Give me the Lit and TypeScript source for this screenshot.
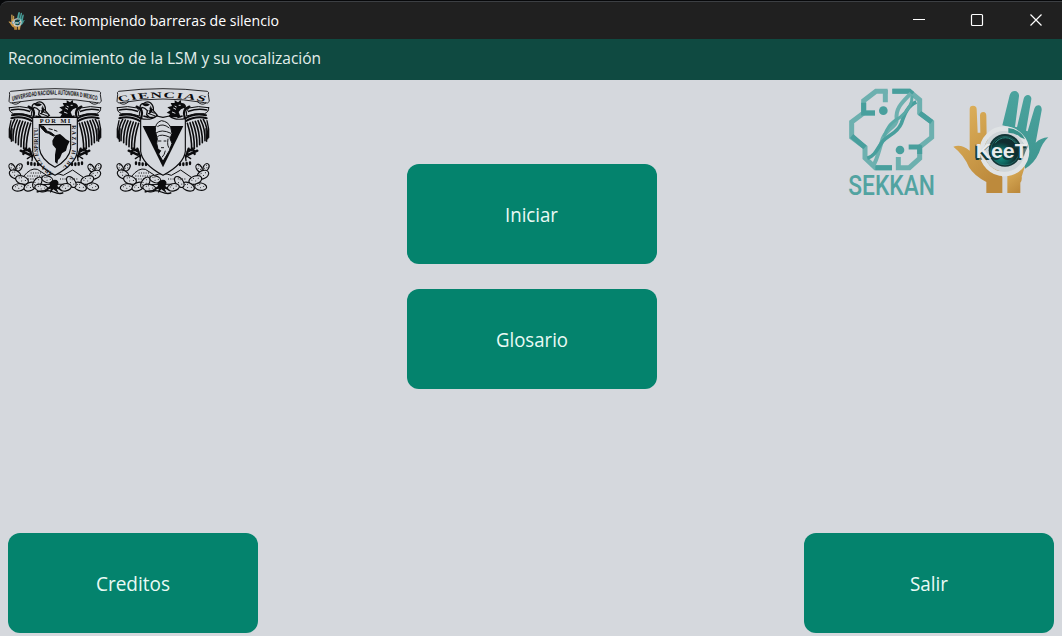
import { LitElement, html, css, svg } from "lit";
import { customElement, property } from "lit/decorators.js";

const INK = "#0b0b0d";
const PAPER = "#d5d8dd";

// One wing, drawn on the left side; the right one is its mirror image.
const wing = () => svg`
  <g fill="none" stroke=${INK} stroke-linecap="round">
    <path d="M28 83 Q60 76 88 84 Q98 94 94 108 Q70 98 40 101 Q26 95 28 83Z" stroke-width="3"/>
    <path d="M34 90 Q62 84 88 94" stroke-width="5"/>
    <path d="M36 106 Q70 98 100 116 M34 115 Q66 106 98 124" stroke-width="6"/>
    <path d="M86 80 Q108 88 100 112" stroke-width="7"/>
    ${[0, 1, 2, 3, 4, 5, 6].map(
      (i) => svg`<path d="M${44 + i * 8} ${118 + i * 2} Q${30 + i * 8} ${142 + i * 5} ${31 + i * 8} ${176 + i * 6}" stroke-width="4.8"/>`
    )}
    <path d="M33 122 Q26 145 28 172 M36 146 L34 184" stroke-width="4"/>
    <path d="M62 212 L88 224 M70 222 L76 206 L92 216 M88 206 L96 230" stroke-width="7"/>
    <path d="M82 236 L94 228 M98 226 L96 242" stroke-width="4"/>
    <path d="M84 247 v5 M94 249 v5 M104 250 v5 M114 250 v5" stroke-width="7"/>
  </g>`;

const pad = (x: number, y: number, rx: number, ry: number, a: number) => svg`
  <g transform="translate(${x} ${y}) rotate(${a})">
    <ellipse rx=${rx} ry=${ry} fill=${PAPER} stroke=${INK} stroke-width="3.4"/>
    <path d="M${-rx * 0.5} -3h.1M0 3h.1M${rx * 0.5} -2h.1M${-rx * 0.2} -6h.1" stroke=${INK} stroke-width="3" stroke-linecap="round"/>
  </g>`;

const cactus = () => svg`
  <path d="M70 290 Q92 262 112 268 L140 286 Q165 276 190 286 L218 270 L250 292 L240 312 L90 314Z" fill=${PAPER} stroke=${INK} stroke-width="3"/>
  <path d="M82 288 H138 M92 279 H126 M84 297 H150 M180 297 H232" stroke=${INK} stroke-width="3" stroke-dasharray="3 4"/>
  ${pad(36, 262, 12, 8, 60)}${pad(57, 262, 12, 8, -55)}${pad(45, 283, 18, 12, 25)}
  ${pad(66, 300, 20, 12, 20)}${pad(56, 322, 19, 11, -8)}${pad(90, 320, 19, 12, -25)}
  ${pad(112, 308, 19, 11, -55)}${pad(142, 298, 17, 10, 18)}${pad(124, 324, 20, 11, 12)}
  ${pad(294, 262, 12, 8, -60)}${pad(273, 264, 12, 8, 58)}${pad(285, 284, 18, 12, -25)}
  ${pad(262, 300, 20, 12, -20)}${pad(278, 320, 18, 11, 8)}${pad(240, 320, 20, 12, 22)}
  ${pad(214, 306, 19, 11, 52)}${pad(196, 322, 18, 11, -12)}
  <path d="M148 308 Q158 296 170 300 Q180 306 172 318 L188 332 L170 326 L176 340 L160 328 L150 340 L152 326 L130 332 L150 318Z" fill=${INK}/>
  <path d="M110 336 Q140 328 160 336 Q180 344 190 338" fill="none" stroke=${INK} stroke-width="4"/>`;

const birds = () => svg`
  <path d="M96 82 Q97 70 108 70 Q118 62 128 69 Q138 78 136 92 L148 106 L140 112 L124 112 L116 104 L118 92 Q110 82 102 82 L99 88Z" fill=${PAPER} stroke=${INK} stroke-width="4"/>
  <path d="M102 74 Q114 66 126 74 Q116 80 110 78Z M128 76 L134 94 L122 104Z" fill=${INK}/>
  <path d="M122 92 L140 100 M120 100 L142 108 M124 84 L136 90" stroke=${INK} stroke-width="3"/>
  <path d="M234 78 Q230 68 220 69 L218 60 L210 67 L200 61 L200 69 L188 69 L192 78 L178 82 L188 90 L176 98 L186 102 L180 112 L218 112 L212 96 Q218 86 228 84 L232 90Z" fill=${INK}/>
  <path d="M212 76 h6 M196 84 l8 4 M192 96 l10 4 M200 78 l6 3" stroke=${PAPER} stroke-width="3"/>
  <path d="M106 108 L122 112 M224 108 L208 112" stroke=${INK} stroke-width="5"/>`;

const crestBase = () => svg`
  ${wing()}
  <g transform="translate(330 0) scale(-1 1)">${wing()}</g>
  ${cactus()}
  ${birds()}
  <path d="M29 44 Q26 36 32 34 Q165 18 298 34 Q304 36 301 44 L304 64 Q300 72 290 68 Q165 46 40 68 Q30 72 27 64Z" fill=${PAPER} stroke=${INK} stroke-width="2.6"/>
  <path d="M36 69 Q48 78 62 65 M294 69 Q282 78 268 65" fill="none" stroke=${INK} stroke-width="2.6"/>`;

@customElement("unam-crest")
class UnamCrest extends LitElement {
  static styles = css`
    :host { display: block; width: 110px; height: 120px; }
    .art { display: block; width: 100%; height: 100%; }
    .motto { font: 700 17px "Liberation Serif", serif; fill: #0b0b0d; }
    .top { font: 700 19px "Liberation Serif", serif; fill: #0b0b0d; }
    .ribbon { font: 700 20px "Liberation Sans", sans-serif; fill: #0b0b0d; }
  `;
  render() {
    return html`<svg class="art" viewBox="0 0 330 360">
      ${crestBase()}
      ${svg`
      <path id="rib" d="M61 106 Q275 68 493 106" fill="none"/>
      <g transform="scale(.6 1) translate(0 -43)">
        <text class="ribbon"><textPath href="#rib" textLength="428" lengthAdjust="spacingAndGlyphs">UNIVERSIDAD NACIONAL AUTONOMA D MEXICO</textPath></text>
      </g>
      <path d="M98 112 H232 V214 Q228 252 165 286 Q102 252 98 214Z" fill=${PAPER} stroke=${INK} stroke-width="3.4"/>
      <path d="M118 134 H212 V205 Q208 238 165 262 Q122 238 118 205Z" fill=${PAPER} stroke=${INK} stroke-width="3.4"/>
      <text class="top" x="119" y="130" textLength="92">POR MI</text>
      <path id="lft" d="M160 280 Q114 252 114 212 V134" fill="none"/>
      <text class="motto"><textPath href="#lft" textLength="154">ARA EL ESPIRITU</textPath></text>
      <path id="rgt" d="M216 136 V210 Q212 250 168 276" fill="none"/>
      <text class="motto"><textPath href="#rgt" textLength="134">RAZA HABL</textPath></text>
      <path d="M119 136 L132 140 L142 154 L152 157 L164 166 L160 168 L146 160 L136 157 L124 144Z M146 146 L158 149 M162 150 L172 154" fill=${INK} stroke=${INK} stroke-width="3"/>
      <path d="M166 166 L180 162 L190 170 L198 178 L209 184 L202 198 L198 212 L186 220 L180 234 L174 240 L172 252 L165 246 L165 224 L168 206 L158 194 L157 182Z" fill=${INK}/>
      `}
    </svg>`;
  }
}

@customElement("ciencias-crest")
class CienciasCrest extends LitElement {
  static styles = css`
    :host { display: block; width: 110px; height: 120px; }
    .art { display: block; width: 100%; height: 100%; }
    .ribbon { font: 700 25px "Liberation Serif", serif; fill: #0b0b0d; }
  `;
  render() {
    return html`<svg class="art" viewBox="0 0 330 360">
      ${crestBase()}
      ${svg`
      <path id="rib" d="M18.500 66 Q86 41 155 66" fill="none"/>
      <g transform="scale(1.9 1)">
        <text class="ribbon"><textPath href="#rib" textLength="136">CIENCIAS</textPath></text>
      </g>
      <path d="M98 116 Q130 122 146 108 L165 112 L184 108 Q200 122 232 116 V214 Q228 252 165 286 Q102 252 98 214Z" fill=${PAPER} stroke=${INK} stroke-width="3.4"/>
      <path d="M104 138 H226 L165 262Z" fill=${INK}/>
      <path d="M142 154 Q140 128 160 122 Q180 124 188 142 L192 160 L186 176 L192 190 L184 212 L165 244 L152 222 L158 212 L150 208 L146 190 L148 176Z" fill=${PAPER} stroke=${INK} stroke-width="3"/>
      <path d="M143 160 Q160 146 189 160 M148 170 Q160 160 186 172 M150 183 h10 M167 183 h8 M159 203 h9 M180 176 Q176 200 186 206 M172 212 Q170 224 162 232 M148 140 Q164 128 184 144" fill="none" stroke=${INK} stroke-width="2.8"/>
      `}
    </svg>`;
  }
}

@customElement("sekkan-logo")
class SekkanLogo extends LitElement {
  static styles = css`
    :host { display: block; width: 105px; height: 120px; }
    .art { display: block; width: 100%; height: 100%; overflow: visible; }
    .word { font: 500 81px Roboto, sans-serif; fill: #52a3a1; }
  `;
  render() {
    return html`<svg class="art" viewBox="0 0 315 360">
      <g fill="none" stroke="#6db0af" stroke-width="15">
        <path d="M143 34 H108 L71 62 V99 L35 126 V172 L75 202 V234 L106 263 H156" />
        <path d="M157 34 H208 L239 60 V99 L275 126 V172 L239 201 V235 L208 263 H175 V231" />
        <path d="M71 99 H105 M136 30 V67" />
        <path d="M206 201 H242" stroke="#489f9d" />
      </g>
      <g fill="none" stroke="#489f9d" stroke-width="15">
        <path d="M71 68 V99 H105 M157 34 H208 L218 42 M35 168 L75 202 M106 263 H156 M239 99 L275 126 M239 196 V222" />
      </g>
      <path d="M213 40 C188 66 166 84 170 118 C172 140 138 146 128 176 C116 214 112 240 98 260" fill="none" stroke="#6db0af" stroke-width="12" />
      <path d="M229 66 C204 76 194 100 184 130 C172 160 146 164 128 184 C112 204 108 226 82 235" fill="none" stroke="#489f9d" stroke-width="11" />
      <path d="M216 48 C218 70 204 92 180 112 C150 128 140 146 132 170" fill="none" stroke="#5aaaa7" stroke-width="9" />
      <circle cx="130" cy="92" r="13" fill="#489f9d" />
      <circle cx="180" cy="210" r="13" fill="#489f9d" />
      <text class="word" x="25" y="344" textLength="260" lengthAdjust="spacingAndGlyphs">SEKKAN</text>
    </svg>`;
  }
}

@customElement("keet-logo")
class KeetLogo extends LitElement {
  static styles = css`
    :host { display: block; width: 115px; height: 120px; }
    .art { display: block; width: 100%; height: 100%; }
    .word { font: 700 58px "Liberation Sans", sans-serif; }
    .shade { fill: #123b3b; }
    .face { fill: #e9ebec; }
  `;
  render() {
    return html`<svg class="art" viewBox="0 0 345 360">
      <defs>
        <linearGradient id="gold" x1="0" y1="0" x2="0.5" y2="1">
          <stop offset="0" stop-color="#e0b45e" />
          <stop offset="1" stop-color="#bd8a3c" />
        </linearGradient>
        <linearGradient id="sea" x1="0" y1="0" x2="0" y2="1">
          <stop offset="0" stop-color="#4ba39e" />
          <stop offset="1" stop-color="#3e9690" />
        </linearGradient>
        <radialGradient id="orb" cx=".35" cy=".7">
          <stop offset="0" stop-color="#169486" />
          <stop offset=".6" stop-color="#0d5f59" />
          <stop offset="1" stop-color="#102e30" />
        </radialGradient>
      </defs>
      <path d="M74 87 Q74 77 84 77 Q95 77 95 88 L98 158 L106 158 L105 106 Q106 96 115 96 Q124 97 124 107 L125 170 L172 292 V339 H124 V306 Q88 288 72 262 Q58 226 25 200 Q48 190 74 212Z" fill="url(#gold)" />
      <path d="M187 284 L240 258 L230 290 Q232 300 226 308 V339 H187Z" fill="url(#gold)" />
      <path d="M172 136 L194 46 Q198 32 211 33 Q223 36 222 49 L210 140 L216 142 L236 56 Q240 44 250 45 Q260 48 259 58 L243 152 L248 154 L268 86 Q272 75 282 76 Q291 79 290 91 L272 188 Q286 174 310 172 Q292 188 282 218 Q268 250 240 266 L232 180 Q210 150 190 140Z" fill="url(#sea)" />
      <circle cx="178" cy="214" r="68" fill="none" stroke="#e0e3e5" stroke-width="14" />
      <circle cx="178" cy="214" r="61" fill="#cfd5d8" />
      <path d="M190 144 Q226 148 240 178 L226 172 Q212 158 190 158Z" fill="#39918a" />
      <circle cx="180" cy="211" r="49" fill="#123536" />
      <circle cx="180" cy="212" r="43" fill="url(#orb)" stroke="#287c76" stroke-width="2" />
      <path d="M150 190 A37 37 0 0 1 212 190" fill="none" stroke="#2e8c82" stroke-width="3" />
      <path d="M112 240 L90 192 V235Z M218 194 H248 V200 L232 236Z" fill="#24494b" opacity=".65" />
      <text class="word shade" x="88" y="239" textLength="156" lengthAdjust="spacingAndGlyphs">KeeT</text>
      <text class="word face" x="92" y="235" textLength="156" lengthAdjust="spacingAndGlyphs">KeeT</text>
    </svg>`;
  }
}

@customElement("menu-button")
class MenuButton extends LitElement {
  @property() label = "";
  @property({ type: Number }) span = 60;
  static styles = css`
    :host { display: block; }
    .btn {
      display: flex; align-items: center; justify-content: center;
      width: 250px; height: 100px; border: 0; border-radius: 12px; padding: 4px 1px 0 0;
      background: #04836d; cursor: pointer;
    }
    .text { display: block; height: 30px; overflow: visible; }
    .glyphs { font: 400 19.5px "Open Sans", "Noto Sans", sans-serif; fill: #eafaf5; }
  `;
  render() {
    return html`<button class="btn">
      <svg class="text" width=${this.span} height="30">
        <text class="glyphs" x="0" y="21" textLength=${this.span} lengthAdjust="spacingAndGlyphs">${this.label}</text>
      </svg>
    </button>`;
  }
}

@customElement("app-root")
class AppRoot extends LitElement {
  static styles = css`
    :host { display: block; background: #07080a; font-family: "Open Sans", "Noto Sans", sans-serif; }
    .window { display: flex; flex-direction: column; box-sizing: border-box; height: 636px; padding-top: 1px; }
    .titlebar {
      display: flex; align-items: center; box-sizing: border-box; height: 38px;
      background: #202020; border-top: 1px solid #3c3f43; border-top-left-radius: 8px;
    }
    .icon { width: 20px; height: 21px; margin-left: 7px; }
    .caption { display: block; height: 24px; margin-left: 6px; overflow: visible; }
    .captiontext { font-size: 15px; fill: #ffffff; }
    .spacer { flex: 1; }
    .controls { display: block; width: 174px; height: 37px; }
    .subbar { display: flex; align-items: center; box-sizing: border-box; height: 41px; padding: 0 0 2px 8px; background: #0f4a41; }
    .heading { display: block; height: 24px; overflow: visible; }
    .headingtext { font-size: 16px; fill: #e4efec; }
    .content { display: flex; flex-direction: column; flex: 1; background: #d5d8dd; }
    .upper { display: grid; grid-template-columns: 1fr 250px 1fr; flex: 1; }
    .logos { display: flex; align-items: flex-start; }
    .right { justify-content: flex-end; padding-right: 2px; }
    .second { margin-left: -2px; }
    .actions { display: flex; flex-direction: column; gap: 25px; padding-top: 84px; padding-left: 1px; }
    .footer { display: flex; justify-content: space-between; padding: 0 8px 3px; }
  `;
  render() {
    return html`<div class="window">
      <div class="titlebar">
        <keet-logo class="icon"></keet-logo>
        <svg class="caption" width="246" height="24">
          <text class="captiontext" x="0" y="17" textLength="246" lengthAdjust="spacingAndGlyphs">Keet: Rompiendo barreras de silencio</text>
        </svg>
        <div class="spacer"></div>
        <svg class="controls" viewBox="0 0 174 37" fill="none" stroke="#fff">
          <path d="M25 17.5 H37" />
          <rect x="83.5" y="12.5" width="11" height="11" rx="1" stroke-width="1.2" />
          <path d="M142.500 12.500 L153.500 23.500 M153.500 12.500 L142.500 23.500" stroke-width="1.2" />
        </svg>
      </div>
      <div class="subbar">
        <svg class="heading" width="313" height="24">
          <text class="headingtext" x="0" y="17" textLength="313" lengthAdjust="spacingAndGlyphs">Reconocimiento de la LSM y su vocalización</text>
        </svg>
      </div>
      <div class="content">
        <div class="upper">
          <div class="logos">
            <unam-crest></unam-crest>
            <ciencias-crest class="second"></ciencias-crest>
          </div>
          <div class="actions">
            <menu-button label="Iniciar" span="53"></menu-button>
            <menu-button label="Glosario" span="72"></menu-button>
          </div>
          <div class="logos right">
            <sekkan-logo></sekkan-logo>
            <keet-logo></keet-logo>
          </div>
        </div>
        <div class="footer">
          <menu-button label="Creditos" span="74"></menu-button>
          <menu-button label="Salir" span="38"></menu-button>
        </div>
      </div>
    </div>`;
  }
}
